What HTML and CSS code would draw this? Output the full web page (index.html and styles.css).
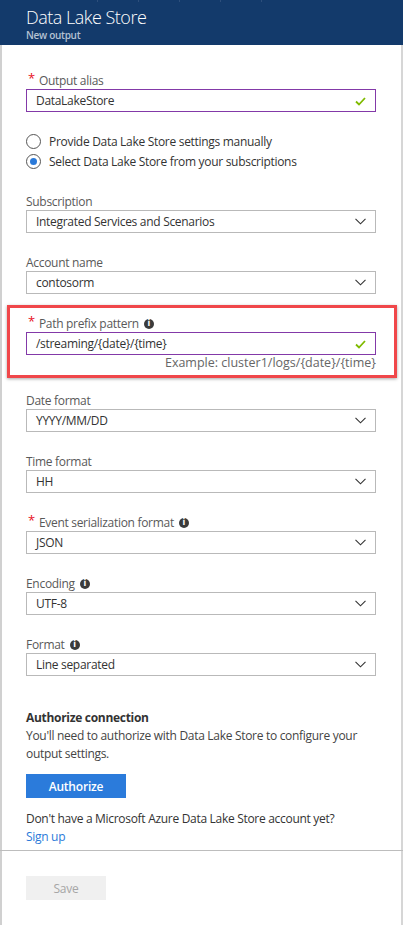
FILE: index.html
```html
<!DOCTYPE html>
<html>
<head>
<meta charset="utf-8">
<link rel="stylesheet" href="styles.css">
</head>
<body>
<div class="blade">
  <header class="head">
    <div class="tabs"><span></span><span></span><span></span><span></span><span></span></div>
    <h1 class="title">Data Lake Store</h1>
    <div class="subtitle">New output</div>
  </header>
  <main class="content">
    <div class="field field-alias">
      <div class="label"><span class="req">*</span>Output alias</div>
      <div class="input valid"><span class="val">DataLakeStore</span>
        <svg class="check" width="11" height="9" viewBox="0 0 11 9"><path d="M1 4.5 L4 7.5 L10 1" fill="none" stroke="#7fba00" stroke-width="1.8"/></svg>
      </div>
    </div>
    <div class="radios">
      <div class="radio"><span class="dot"></span>Provide Data Lake Store settings manually</div>
      <div class="radio"><span class="dot on"></span>Select Data Lake Store from your subscriptions</div>
    </div>
    <div class="field">
      <div class="label">Subscription</div>
      <div class="input"><span class="val">Integrated Services and Scenarios</span><svg class="chev" width="11" height="7" viewBox="0 0 11 7"><path d="M0.5 0.8 L5.5 5.8 L10.5 0.8" fill="none" stroke="#333" stroke-width="1.1"/></svg></div>
    </div>
    <div class="field">
      <div class="label">Account name</div>
      <div class="input"><span class="val">contosorm</span><svg class="chev" width="11" height="7" viewBox="0 0 11 7"><path d="M0.5 0.8 L5.5 5.8 L10.5 0.8" fill="none" stroke="#333" stroke-width="1.1"/></svg></div>
    </div>
    <div class="field highlighted">
      <div class="label"><span class="req">*</span>Path prefix pattern<span class="info">i</span></div>
      <div class="input valid"><span class="val">/streaming/{date}/{time}</span>
        <svg class="check" width="11" height="9" viewBox="0 0 11 9"><path d="M1 4.5 L4 7.5 L10 1" fill="none" stroke="#7fba00" stroke-width="1.8"/></svg>
      </div>
      <div class="hint">Example: cluster1/logs/{date}/{time}</div>
      <div class="annot"></div>
    </div>
    <div class="field">
      <div class="label">Date format</div>
      <div class="input"><span class="val">YYYY/MM/DD</span><svg class="chev" width="11" height="7" viewBox="0 0 11 7"><path d="M0.5 0.8 L5.5 5.8 L10.5 0.8" fill="none" stroke="#333" stroke-width="1.1"/></svg></div>
    </div>
    <div class="field">
      <div class="label">Time format</div>
      <div class="input"><span class="val">HH</span><svg class="chev" width="11" height="7" viewBox="0 0 11 7"><path d="M0.5 0.8 L5.5 5.8 L10.5 0.8" fill="none" stroke="#333" stroke-width="1.1"/></svg></div>
    </div>
    <div class="field">
      <div class="label"><span class="req">*</span>Event serialization format<span class="info">i</span></div>
      <div class="input"><span class="val">JSON</span><svg class="chev" width="11" height="7" viewBox="0 0 11 7"><path d="M0.5 0.8 L5.5 5.8 L10.5 0.8" fill="none" stroke="#333" stroke-width="1.1"/></svg></div>
    </div>
    <div class="field">
      <div class="label">Encoding<span class="info">i</span></div>
      <div class="input"><span class="val">UTF-8</span><svg class="chev" width="11" height="7" viewBox="0 0 11 7"><path d="M0.5 0.8 L5.5 5.8 L10.5 0.8" fill="none" stroke="#333" stroke-width="1.1"/></svg></div>
    </div>
    <div class="field">
      <div class="label">Format<span class="info">i</span></div>
      <div class="input"><span class="val">Line separated</span><svg class="chev" width="11" height="7" viewBox="0 0 11 7"><path d="M0.5 0.8 L5.5 5.8 L10.5 0.8" fill="none" stroke="#333" stroke-width="1.1"/></svg></div>
    </div>
    <section class="auth">
      <div class="auth-title">Authorize connection</div>
      <p class="auth-text">You'll need to authorize with Data Lake Store to configure your output settings.</p>
      <button class="btn-primary">Authorize</button>
      <p class="signup-text">Don't have a Microsoft Azure Data Lake Store account yet?<br><a class="link" href="#">Sign up</a></p>
    </section>
  </main>
  <footer class="foot">
    <button class="btn-save">Save</button>
  </footer>
</div>
</body>
</html>
```
FILE: styles.css
```css
* { box-sizing: border-box; }
html, body { margin: 0; padding: 0; }
body {
  font-family: "Open Sans", "Noto Sans", sans-serif;
  font-size: 12px;
  letter-spacing: -0.3px;
  color: #333;
  background: #fff;
  width: 403px;
  height: 925px;
  overflow: hidden;
}
.blade {
  height: 925px;
  border-left: 2px solid #d0d0d0;
  border-right: 2px solid #d6d6d6;
  display: flex;
  flex-direction: column;
}
.head {
  background: #133a6b;
  height: 45px;
  margin-left: -2px;
  margin-right: -2px;
  padding: 6px 0 0 26px;
  position: relative;
}
.tabs {
  position: absolute;
  top: 0; left: 0; right: 0;
  height: 2px;
  display: flex;
  padding-left: 57px;
}
.tabs span {
  width: 41px;
  height: 2px;
  border-right: 1px solid #2d4f7c;
}
.title {
  margin: 0;
  font-family: "Open Sans", sans-serif;
  font-weight: 300;
  font-size: 18px;
  line-height: 22px;
  color: #fff;
  letter-spacing: -0.5px;
}
.subtitle {
  font-size: 10px;
  font-weight: 600;
  color: #b5c2d3;
  line-height: 12px;
  margin-top: 1px;
  letter-spacing: -0.3px;
}
.content {
  padding: 28px 25px 0 24px;
  flex: 1;
}
.field {
  margin-bottom: 22px;
  position: relative;
}
.field-alias { margin-bottom: 19px; }
.label {
  height: 16px;
  line-height: 16px;
  font-size: 12px;
  color: #595959;
  display: flex;
  align-items: center;
}
.req {
  color: #e81123;
  font-size: 13px;
  margin-left: 2px;
  margin-right: 4px;
  position: relative;
  top: -3px;
}
.info {
  display: inline-flex;
  align-items: center;
  justify-content: center;
  width: 10px;
  height: 10px;
  border-radius: 50%;
  background: #3b3b3b;
  color: #fff;
  font-size: 8px;
  font-weight: 700;
  margin-left: 5px;
  letter-spacing: 0;
  font-family: "DejaVu Sans", sans-serif;
}
.input {
  height: 23px;
  border: 1px solid #b9b9b9;
  display: flex;
  align-items: center;
  justify-content: space-between;
  padding: 0 9px 0 9px;
  color: #333;
  font-size: 12px;
}
.input.valid { border-color: #8339a8; }
.val { white-space: nowrap; }
.check { margin-top: 1px; }
.hint {
  text-align: right;
  color: #666;
  font-size: 12.5px;
  letter-spacing: 0;
  line-height: 16px;
  margin-top: 0;
}
.annot {
  position: absolute;
  top: -11px;
  left: -19px;
  right: -21px;
  bottom: -7px;
  border: 3px solid #f0474a;
  box-shadow: 0 1px 3px rgba(0,0,0,0.35);
  pointer-events: none;
}
.radios {
  margin: 19px 0 23px;
}
.radio {
  height: 20px;
  display: flex;
  align-items: center;
  font-size: 12px;
  color: #333;
}
.dot {
  width: 15px;
  height: 15px;
  border: 1px solid #555;
  border-radius: 50%;
  margin-right: 8px;
  position: relative;
  background: #fff;
}
.dot.on::after {
  content: "";
  position: absolute;
  left: 3px; top: 3px;
  width: 7px; height: 7px;
  border-radius: 50%;
  background: #2b7ad9;
}
.auth {
  margin-top: 33px;
}
.auth-title {
  font-weight: 700;
  font-size: 12px;
  line-height: 18px;
  color: #333;
}
.auth-text {
  margin: 0;
  line-height: 18px;
  color: #444;
}
.btn-primary {
  margin-top: 11px;
  width: 100px;
  height: 24px;
  border: 0;
  background: #2b7bdb;
  color: #fff;
  font-family: inherit;
  font-weight: 600;
  font-size: 12px;
  letter-spacing: -0.2px;
  padding: 0;
  display: block;
}
.signup-text {
  margin: 12px 0 0;
  line-height: 18px;
  color: #333;
}
.link {
  color: #2b7ad9;
  text-decoration: none;
}
.foot {
  margin-left: -2px;
  margin-right: -2px;
  border-top: 1px solid #bdbdbd;
  height: 75px;
  padding: 25px 0 0 26px;
}
.btn-save {
  width: 80px;
  height: 24px;
  border: 0;
  background: #f0f0f0;
  color: #a6a6a6;
  font-family: inherit;
  font-size: 12px;
  letter-spacing: -0.2px;
  padding: 0;
}
```
